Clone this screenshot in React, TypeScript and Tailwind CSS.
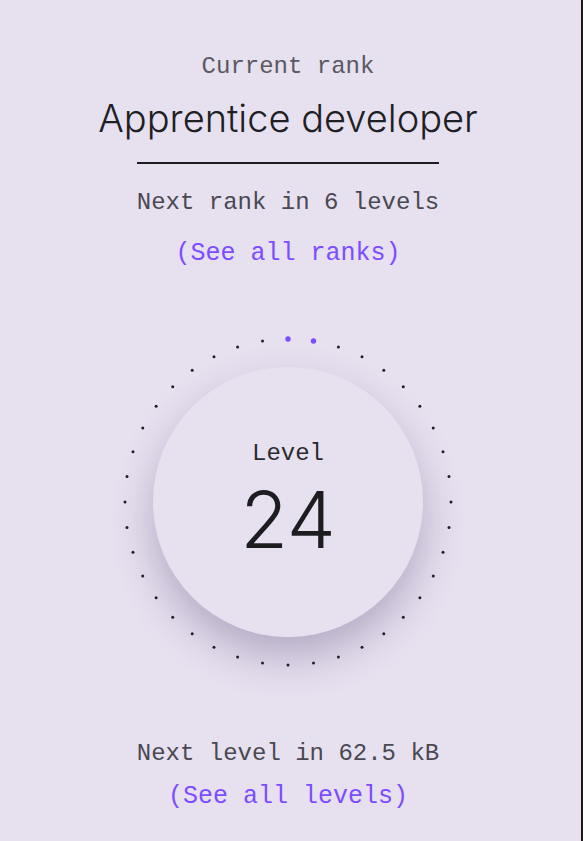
const mono = "font-['Liberation_Mono','DejaVu_Sans_Mono',monospace]";
const sans = "font-['Inter','Roboto',sans-serif]";

function DotRing() {
  const dots = Array.from({ length: 40 }, (_, i) => {
    const a = (i * 9 * Math.PI) / 180;
    return {
      x: 170 + 163 * Math.sin(a),
      y: 170 - 163 * Math.cos(a),
      active: i < 2,
    };
  });
  return (
    <svg width="340" height="340" viewBox="0 0 340 340" className="absolute inset-0">
      {dots.map((d, i) => (
        <circle
          key={i}
          cx={d.x}
          cy={d.y}
          r={d.active ? 2.7 : 1.5}
          fill={d.active ? "#7c4dff" : "#1f1f24"}
        />
      ))}
    </svg>
  );
}

export default function App() {
  return (
    <div className="w-[583px] h-[841px] bg-[#e6e0ef] border-r-2 border-[#18181b] pr-[5px] flex flex-col items-center overflow-hidden">
      <div className={`${mono} mt-[51px] text-[24px] leading-[32px] text-[#5a5860]`}>
        Current rank
      </div>
      <div className={`${sans} mt-[11px] text-[38px] leading-[48px] font-light text-[#202024]`}>
        Apprentice developer
      </div>
      <div className="mt-[20px] w-[302px] h-[2px] bg-[#1e1e22]" />
      <div className={`${mono} mt-[23px] text-[24px] leading-[32px] text-[#4a4850]`}>
        Next rank in 6 levels
      </div>
      <div className={`${mono} mt-[19px] text-[25px] leading-[32px] text-[#7c4dff]`}>
        (See all ranks)
      </div>

      <div className="relative mt-[62px] w-[340px] h-[340px] shrink-0">
        <DotRing />
        <div className="absolute left-[35px] top-[35px] w-[270px] h-[270px] rounded-full bg-[#e7e1ef] shadow-[0_20px_40px_rgba(70,50,100,0.3)] flex flex-col items-center">
          <div className={`${mono} mt-[71px] text-[24px] leading-[32px] text-[#2a2a2e]`}>Level</div>
          <div className={`${sans} mt-[10px] text-[78px] leading-[80px] font-light text-[#1d1d20]`}>24</div>
        </div>
      </div>

      <div className={`${mono} mt-[66px] text-[24px] leading-[32px] text-[#4a4850]`}>
        Next level in 62.5 kB
      </div>
      <div className={`${mono} mt-[11px] text-[25px] leading-[32px] text-[#7c4dff]`}>
        (See all levels)
      </div>
    </div>
  );
}
